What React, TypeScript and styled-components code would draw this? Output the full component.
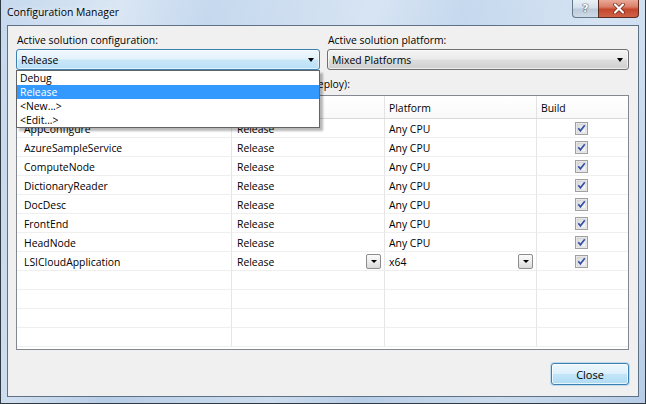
import React from "react";
import styled, { createGlobalStyle } from "styled-components";

const GlobalStyle = createGlobalStyle`
  *, *::before, *::after { box-sizing: border-box; }
  html, body { margin: 0; padding: 0; }
  body {
    width: 646px;
    height: 404px;
    overflow: hidden;
    background: #ffffff;
    font-family: "Open Sans", "Noto Sans", sans-serif;
  }
`;

const Window = styled.div`
  width: 646px;
  height: 404px;
  display: flex;
  flex-direction: column;
  border: 1px solid #2f3a45;
  border-top: none;
  background:
    linear-gradient(105deg,
      rgba(255,255,255,0) 0%, rgba(255,255,255,0.35) 16%, rgba(255,255,255,0) 28%,
      rgba(255,255,255,0.3) 50%, rgba(255,255,255,0) 62%,
      rgba(255,255,255,0.28) 80%, rgba(255,255,255,0) 100%),
    linear-gradient(180deg, #c6d9ee 0%, #b7cde6 100%);
  font-family: "Open Sans", "Noto Sans", sans-serif;
  font-size: 10.4px;
  color: #000;
`;

const TitleBar = styled.div`
  flex: none;
  height: 25px;
  display: flex;
  align-items: flex-start;
  padding: 0 6px 0 6px;
`;

const Title = styled.div`
  line-height: 25px;
  font-size: 10.4px;
  color: #000;
  text-shadow: 0 0 6px rgba(255, 255, 255, 0.9);
`;

const Caption = styled.div`
  margin-left: auto;
  display: flex;
  height: 18px;
`;

const HelpButton = styled.div`
  width: 26px;
  height: 18px;
  border: 1px solid #66788c;
  border-top: none;
  border-right: none;
  border-bottom-left-radius: 4px;
  background: linear-gradient(180deg, #e9f0f7 0%, #d5e0ec 45%, #bccbdb 55%, #cfdae6 100%);
  display: flex;
  align-items: center;
  justify-content: center;
  color: #ffffff;
  font-family: "DejaVu Sans", sans-serif;
  font-weight: 700;
  font-size: 11px;
  text-shadow: 0 0 1px #44505c, 0 0 1px #44505c, 0 0 1px #44505c;
`;

const CloseCaption = styled.div`
  width: 41px;
  height: 18px;
  border: 1px solid #5b2b22;
  border-top: none;
  border-bottom-right-radius: 4px;
  background: linear-gradient(180deg, #eaa999 0%, #db7f68 40%, #c5472c 55%, #cf6247 100%);
  display: flex;
  align-items: center;
  justify-content: center;
`;

const Client = styled.div`
  flex: 1;
  margin: 0 6px 6px 6px;
  border: 1px solid #5f7186;
  background: #f0f0f0;
  padding: 7px 9px 11px 8px;
  display: flex;
  flex-direction: column;
`;

const TopRow = styled.div`
  display: grid;
  grid-template-columns: 304px 302px;
  column-gap: 7px;
`;

const Field = styled.div`
  position: relative;
  display: flex;
  flex-direction: column;
  gap: 2px;
`;

const Label = styled.div`
  height: 14px;
  line-height: 14px;
  padding-left: 1px;
  white-space: nowrap;
`;

const Combo = styled.div<{ $open?: boolean }>`
  height: 21px;
  display: flex;
  align-items: center;
  padding: 0 5px 0 4px;
  border: 1px solid ${(p) => (p.$open ? "#3c7fb1" : "#707070")};
  border-radius: 3px;
  background: ${(p) =>
    p.$open
      ? "linear-gradient(180deg, #f0f8fd 0%, #e2f2fb 48%, #c9e7f8 52%, #b9dff5 100%)"
      : "linear-gradient(180deg, #f3f3f3 0%, #ebebeb 48%, #dddddd 52%, #cfcfcf 100%)"};
  box-shadow: inset 0 0 0 1px rgba(255, 255, 255, 0.6);
`;

const ComboText = styled.span`
  flex: 1;
  white-space: nowrap;
`;

const Arrow = styled.span`
  width: 0;
  height: 0;
  border-left: 3.5px solid transparent;
  border-right: 3.5px solid transparent;
  border-top: 4px solid #000;
`;

const Popup = styled.div`
  position: absolute;
  top: 100%;
  left: 0;
  width: 100%;
  z-index: 10;
  background: #ffffff;
  border: 1px solid #646464;
  box-shadow: 3px 3px 2px rgba(0, 0, 0, 0.28);
  display: flex;
  flex-direction: column;
`;

const PopupItem = styled.div<{ $selected?: boolean }>`
  height: 14px;
  line-height: 14px;
  padding-left: 3px;
  background: ${(p) => (p.$selected ? "#3399ff" : "transparent")};
  color: ${(p) => (p.$selected ? "#ffffff" : "#000000")};
`;

const ProjectLabel = styled(Label)`
  margin-top: 7px;
`;

const GridBox = styled.div`
  margin-top: 4px;
  height: 255px;
  border: 1px solid #828790;
  background: #ffffff;
  overflow: hidden;
`;

const COLS = "215px 153px 152px 91px";

const HeaderRow = styled.div`
  display: grid;
  grid-template-columns: ${COLS};
  height: 23px;
`;

const HeaderCell = styled.div<{ $pad: number }>`
  display: flex;
  align-items: center;
  padding-left: ${(p) => p.$pad}px;
  padding-top: 1px;
  border-right: 1px solid #e3e3e3;
  border-bottom: 1px solid #d9d9d9;
  background: linear-gradient(180deg, #ffffff 0%, #f9f9f9 100%);
  &:last-child { border-right: none; }
`;

const Row = styled.div`
  display: grid;
  grid-template-columns: ${COLS};
  height: 19px;
`;

const Cell = styled.div<{ $pad?: number; $center?: boolean }>`
  display: flex;
  align-items: center;
  justify-content: ${(p) => (p.$center ? "center" : "flex-start")};
  padding-left: ${(p) => p.$pad ?? 0}px;
  padding-right: 3px;
  padding-top: 1px;
  border-right: 1px solid #e6e6e6;
  border-bottom: 1px solid #efefef;
  white-space: nowrap;
  &:last-child { border-right: none; }
`;

const CellText = styled.span`
  flex: 1;
`;

const MiniDrop = styled.div`
  width: 15px;
  height: 15px;
  border: 1px solid #8c8c8c;
  border-radius: 2px;
  background: linear-gradient(180deg, #fbfbfb 0%, #ececec 50%, #dadada 100%);
  display: flex;
  align-items: center;
  justify-content: center;
`;

const SmallArrow = styled.span`
  width: 0;
  height: 0;
  border-left: 3px solid transparent;
  border-right: 3px solid transparent;
  border-top: 3px solid #000;
`;

const Footer = styled.div`
  margin-top: 13px;
  display: flex;
  justify-content: flex-end;
`;

const DialogButton = styled.div`
  width: 78px;
  height: 22px;
  border: 1px solid #3c7fb1;
  border-radius: 3px;
  background: linear-gradient(180deg, #eef7fd 0%, #dcf0fb 48%, #c3e5f8 52%, #addbf4 100%);
  box-shadow: inset 0 0 0 1px rgba(255, 255, 255, 0.7), 0 0 0 1px rgba(96, 180, 232, 0.35);
  display: flex;
  align-items: center;
  justify-content: center;
  font-size: 11px;
`;

const CheckBox: React.FC = () => (
  <svg width="13" height="13" viewBox="0 0 13 13">
    <defs>
      <linearGradient id="cbg" x1="0" y1="0" x2="1" y2="1">
        <stop offset="0" stopColor="#d8d8d8" />
        <stop offset="1" stopColor="#fbfbfb" />
      </linearGradient>
    </defs>
    <rect x="0.5" y="0.5" width="12" height="12" fill="#f4f4f4" stroke="#a0a0a0" />
    <rect x="2" y="2" width="9" height="9" fill="url(#cbg)" stroke="#c6c6c6" strokeWidth="0.6" />
    <path d="M3.3 6.3 L5.4 8.9 L9.8 3.3" fill="none" stroke="#3550a8" strokeWidth="1.7" />
  </svg>
);

const XGlyph: React.FC = () => (
  <svg width="14" height="11" viewBox="0 0 14 11">
    <path d="M3 1.5 L11 9.5 M11 1.5 L3 9.5" stroke="#6b2418" strokeWidth="3.6" strokeLinecap="round" />
    <path d="M3 1.5 L11 9.5 M11 1.5 L3 9.5" stroke="#ffffff" strokeWidth="2.2" strokeLinecap="round" />
  </svg>
);

type Project = { name: string; config: string; platform: string; dropdowns?: boolean };

const projects: Project[] = [
  { name: "AppConfigure", config: "Release", platform: "Any CPU" },
  { name: "AzureSampleService", config: "Release", platform: "Any CPU" },
  { name: "ComputeNode", config: "Release", platform: "Any CPU" },
  { name: "DictionaryReader", config: "Release", platform: "Any CPU" },
  { name: "DocDesc", config: "Release", platform: "Any CPU" },
  { name: "FrontEnd", config: "Release", platform: "Any CPU" },
  { name: "HeadNode", config: "Release", platform: "Any CPU" },
  { name: "LSICloudApplication", config: "Release", platform: "x64", dropdowns: true },
];

const EMPTY_ROWS = 4;

export default function App() {
  return (
    <>
      <GlobalStyle />
      <Window>
        <TitleBar>
          <Title>Configuration Manager</Title>
          <Caption>
            <HelpButton>?</HelpButton>
            <CloseCaption>
              <XGlyph />
            </CloseCaption>
          </Caption>
        </TitleBar>
        <Client>
          <TopRow>
            <Field>
              <Label>Active solution configuration:</Label>
              <Combo $open>
                <ComboText>Release</ComboText>
                <Arrow />
              </Combo>
              <Popup>
                <PopupItem>Debug</PopupItem>
                <PopupItem $selected>Release</PopupItem>
                <PopupItem>&lt;New...&gt;</PopupItem>
                <PopupItem>&lt;Edit...&gt;</PopupItem>
              </Popup>
            </Field>
            <Field>
              <Label>Active solution platform:</Label>
              <Combo>
                <ComboText>Mixed Platforms</ComboText>
                <Arrow />
              </Combo>
            </Field>
          </TopRow>
          <ProjectLabel>
            Project contexts (check the project configurations to build or deploy):
          </ProjectLabel>
          <GridBox>
            <HeaderRow>
              <HeaderCell $pad={7} />
              <HeaderCell $pad={5} />
              <HeaderCell $pad={4}>Platform</HeaderCell>
              <HeaderCell $pad={4}>Build</HeaderCell>
            </HeaderRow>
            {projects.map((p) => (
              <Row key={p.name}>
                <Cell $pad={7}>{p.name}</Cell>
                <Cell $pad={5}>
                  <CellText>{p.config}</CellText>
                  {p.dropdowns && (
                    <MiniDrop>
                      <SmallArrow />
                    </MiniDrop>
                  )}
                </Cell>
                <Cell $pad={4}>
                  <CellText>{p.platform}</CellText>
                  {p.dropdowns && (
                    <MiniDrop>
                      <SmallArrow />
                    </MiniDrop>
                  )}
                </Cell>
                <Cell $center>
                  <CheckBox />
                </Cell>
              </Row>
            ))}
            {Array.from({ length: EMPTY_ROWS }).map((_, i) => (
              <Row key={`empty-${i}`}>
                <Cell />
                <Cell />
                <Cell />
                <Cell />
              </Row>
            ))}
          </GridBox>
          <Footer>
            <DialogButton>Close</DialogButton>
          </Footer>
        </Client>
      </Window>
    </>
  );
}
